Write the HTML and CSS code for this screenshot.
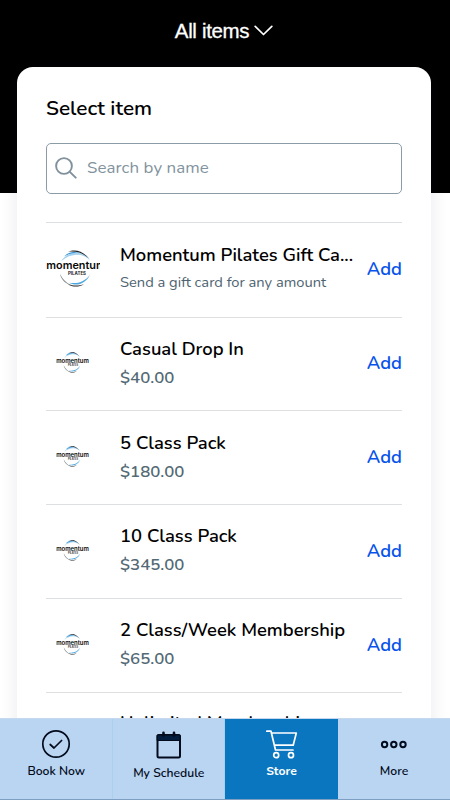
FILE: index.html
```
<!DOCTYPE html>
<html lang="en">
<head>
<meta charset="utf-8">
<title>Store</title>
<link rel="stylesheet" href="styles.css">
</head>
<body>
<svg class="defs" width="0" height="0">
  <defs>
    <symbol id="logo" viewBox="0 0 60 40">
      <path fill="#a3d2f0" d="M15 13C21 2 38 0 44 12C37 4 25 4 15 13Z"/>
      <path fill="#3e97d2" d="M18 8C22 3 29 2 35 3.5C29 3.8 23 5 18 8Z"/>
      <path fill="#222" d="M22 3C28 .3 36 1 43 10C37 4 30 2 22 3Z"/>
      <path fill="#858b8f" d="M14 26C17 33 22 37 27 38.3C21 38 15 33 14 26Z"/>
      <path fill="#4fa7de" d="M23 35.5C32 37 39 34 44 27C40 36 31 40 23 35.5Z"/>
      <path fill="#222" d="M22 37C27 39 33 39 38 37C33 40.5 26 40.3 22 37Z"/>
      <text class="logo-name" x="0.3" y="21" textLength="59.4" lengthAdjust="spacingAndGlyphs">momentum</text>
      <text class="logo-sub" x="22" y="27" textLength="18" lengthAdjust="spacingAndGlyphs">PILATES</text>
    </symbol>
  </defs>
</svg>
<div class="app">
  <main class="content">
    <header class="topbar">
      <span class="filter">All items</span>
      <svg class="chevron" width="19" height="12" viewBox="0 0 19 12"><path d="M1.2 1.4L9.5 9.5L17.8 1.4"/></svg>
    </header>
    <section class="card">
      <h1 class="heading">Select item</h1>
      <div class="search">
        <svg class="search-icon" width="22" height="22" viewBox="0 0 22 22"><circle cx="9" cy="9" r="7.9"/><path d="M14.8 14.8L20.7 20.7"/></svg>
        <span class="placeholder">Search by name</span>
      </div>
      <ul class="items">
        <li class="item item-gift">
          <div class="thumb thumb-large"><svg width="60" height="38" viewBox="0 0 60 40" preserveAspectRatio="none"><use href="#logo" width="60" height="40"/></svg></div>
          <div class="info"><div class="name">Momentum Pilates Gift Ca...</div><div class="note">Send a gift card for any amount</div></div>
          <span class="add">Add</span>
        </li>
        <li class="item">
          <div class="thumb"><svg width="33" height="22"><use href="#logo"/></svg></div>
          <div class="info"><div class="name">Casual Drop In</div><div class="price">$40.00</div></div>
          <span class="add">Add</span>
        </li>
        <li class="item">
          <div class="thumb"><svg width="33" height="22"><use href="#logo"/></svg></div>
          <div class="info"><div class="name">5 Class Pack</div><div class="price">$180.00</div></div>
          <span class="add">Add</span>
        </li>
        <li class="item">
          <div class="thumb"><svg width="33" height="22"><use href="#logo"/></svg></div>
          <div class="info"><div class="name">10 Class Pack</div><div class="price">$345.00</div></div>
          <span class="add">Add</span>
        </li>
        <li class="item">
          <div class="thumb"><svg width="33" height="22"><use href="#logo"/></svg></div>
          <div class="info"><div class="name">2 Class/Week Membership</div><div class="price">$65.00</div></div>
          <span class="add">Add</span>
        </li>
        <li class="item item-last">
          <div class="thumb"></div>
          <div class="info"><div class="name">Unlimited Membership</div></div>
        </li>
      </ul>
    </section>
  </main>
  <nav class="tabs">
    <div class="tab">
      <svg width="30" height="30" viewBox="0 0 30 30"><circle cx="15" cy="15" r="13.2"/><path d="M9.2 15.5L13 19L20.6 11.5"/></svg>
      <span class="label">Book Now</span>
    </div>
    <div class="tab tab-schedule">
      <svg width="30" height="30" viewBox="0 0 30 30"><rect class="cal" x="3.5" y="6" width="22.5" height="22.5" rx="1.5"/><path class="cal-head" d="M3.5 6H26V11.5H3.5Z"/><path class="cal-pin" d="M9.5 3.8V6.5M20 3.8V6.5"/></svg>
      <span class="label">My Schedule</span>
    </div>
    <div class="tab active">
      <svg width="34" height="30" viewBox="0 0 34 30"><path d="M1.8 2.2H6L10.5 21H28M6.6 4H31.3L28.2 16.2H9.4"/><circle cx="11.2" cy="26.2" r="2.5"/><circle cx="26" cy="26.2" r="2.5"/></svg>
      <span class="label">Store</span>
    </div>
    <div class="tab">
      <svg class="dots" width="30" height="30" viewBox="0 0 30 30"><circle cx="5.6" cy="15.5" r="2.7"/><circle cx="14.8" cy="15.5" r="2.7"/><circle cx="24" cy="15.5" r="2.7"/></svg>
      <span class="label">More</span>
    </div>
  </nav>
</div>
</body>
</html>
```
FILE: styles.css
```
* { box-sizing: border-box; }
body { margin: 0; background: #fff; font-family: Nunito, "Noto Sans", sans-serif; color: #000; }
svg { display: block; fill: none; flex: none; }
.defs { position: absolute; }
.app { width: 450px; height: 800px; display: flex; flex-direction: column; overflow: hidden; }
.content { height: 718px; overflow: hidden; background: linear-gradient(#000 0 193px, #fff 193px); }
.topbar { height: 67px; display: flex; justify-content: center; align-items: center; gap: 5px; padding: 0 2px 5px 0; color: #fff; }
.filter { font: 20.5px/26px "Liberation Sans", sans-serif; letter-spacing: -.35px; -webkit-text-stroke: .3px #fff; }
.chevron { stroke: #fff; stroke-width: 1.7; stroke-linecap: round; stroke-linejoin: round; }
.card { width: 414px; height: 700px; margin-left: 17px; padding: 28px 29px 0; border-radius: 16px 16px 0 0; background: #fff; box-shadow: 0 0 18px rgba(50, 50, 93, .1); }
.heading { margin: 0; font-size: 20.8px; line-height: 26px; font-weight: 600; white-space: nowrap; }
.search { height: 51px; width: 356px; margin-top: 22px; padding: 0 8px; border: 1px solid #8c9ca7; border-radius: 5px; display: flex; align-items: center; gap: 10px; }
.search-icon { stroke: #81919c; stroke-width: 1.9; stroke-linecap: round; margin-top: -2px; }
.placeholder { font-size: 16.9px; line-height: 24px; letter-spacing: .08px; color: #82939e; padding-bottom: 1px; }
.items { list-style: none; width: 356px; margin: 28px 0 0; padding: 0; }
.item { height: 93.8px; border-top: 1px solid #dedfe1; display: flex; align-items: center; padding-bottom: 2px; }
.item-gift { height: 94.5px; padding-bottom: 2px; }
.item-gift .info { padding-bottom: 1px; }
.item-last { align-items: flex-start; padding-top: 15.5px; }
.thumb { width: 54px; height: 60px; display: flex; align-items: center; justify-content: center; overflow: hidden; padding: 0 1px 1px 0; }
.thumb-large { justify-content: flex-start; }
.info { flex: 1; min-width: 0; margin-left: 20px; padding-top: 1px; }
.name { font-size: 18.4px; line-height: 28px; font-weight: 600; white-space: nowrap; }
.note { font-size: 14.7px; line-height: 27px; color: #4d6370; white-space: nowrap; }
.price { font-size: 16.8px; line-height: 29px; font-weight: 600; color: #536975; }
.add { font-size: 18.4px; font-weight: 600; color: #0753eb; }
.logo-name { font: 600 11px Inter, sans-serif; fill: #080808; }
.logo-sub { font: 700 5px Inter, sans-serif; fill: #202020; }
.tabs { height: 82px; display: grid; grid-template-columns: 112.5px 112.5px 113px 112px; border-top: 1px solid #c5d8ee; border-bottom: 1px solid #7f9fc2; background: #bad5f2; }
.tab { display: flex; flex-direction: column; align-items: center; padding-top: 10px; color: #020b1c; stroke: currentColor; stroke-width: 1.7; box-shadow: inset -1px 0 #aad0ed; }
.tab:last-child { box-shadow: none; }
.label { margin-top: 3px; font-size: 12.2px; line-height: 18px; font-weight: 600; stroke: none; white-space: nowrap; }
.tab-schedule .label { margin-top: 5px; }
.tab svg { stroke-linecap: round; stroke-linejoin: round; }
.cal { stroke-width: 2; }
.cal-head { fill: #021d3d; stroke-width: 1; }
.cal-pin { stroke-width: 2.6; }
.active { background: #0b76c0; color: #fff; box-shadow: none; }
.active .label { font-weight: 700; }
.dots { stroke-width: 2; }
```
